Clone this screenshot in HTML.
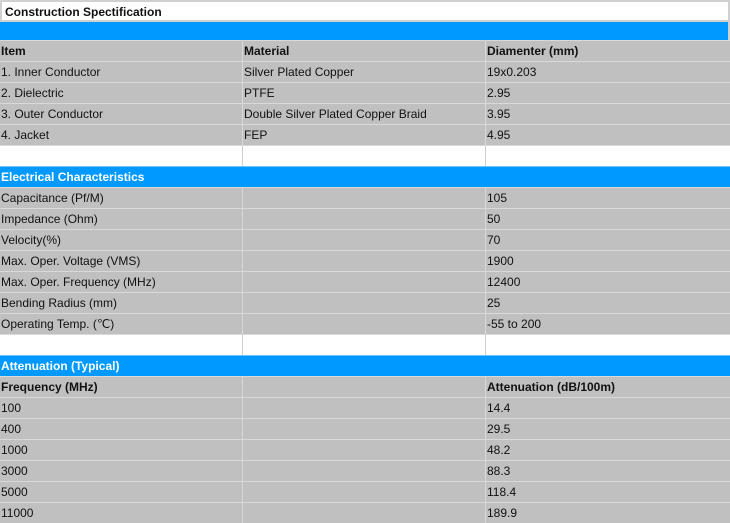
<!DOCTYPE html>
<html><head><meta charset="utf-8"><style>
*{margin:0;padding:0;box-sizing:border-box}
body{width:730px;height:522px;background:#fff;font-family:"Liberation Sans",Arial,sans-serif;font-size:12px;color:#111;position:relative;overflow:hidden}
.r{position:absolute;left:0;width:730px;height:21px;background:#c0c0c0;border-top:1px solid #d9d9d9}
.r span{position:absolute;top:3px;white-space:nowrap}
.c1{left:1px}.c2{left:244px}.c3{left:487px}
.r::before,.r::after{content:"";position:absolute;top:0;bottom:0;width:1px;background:#d9d9d9}
.r::before{left:242px}.r::after{left:485px}
.h span{font-weight:bold}
.w{background:#fff;border-top:1px solid #d9d9d9}
.w::before,.w::after{background:#cfcfcf}
.b{background:#0099ff;border-top:1px solid #6cc4ff;color:#fff;font-weight:bold}
.b::before,.b::after{display:none}
</style></head><body>
<div style="position:absolute;left:0;top:0;width:730px;height:22px;border:2px solid #d0d0d0;background:#fff"><span style="position:absolute;left:3px;top:3px;font-weight:bold;font-size:12px">Construction Spectification</span></div>
<div style="position:absolute;left:0;top:22px;width:728px;height:18px;background:#0099ff"></div>
<div style="position:absolute;left:728px;top:0;width:2px;height:522px;background:#d0d0d0"></div>

<div class="r h" style="top:40px"><span class="c1">Item</span><span class="c2">Material</span><span class="c3">Diamenter (mm)</span></div>
<div class="r" style="top:61px"><span class="c1">1. Inner Conductor</span><span class="c2">Silver Plated Copper</span><span class="c3">19x0.203</span></div>
<div class="r" style="top:82px"><span class="c1">2. Dielectric</span><span class="c2">PTFE</span><span class="c3">2.95</span></div>
<div class="r" style="top:103px"><span class="c1">3. Outer Conductor</span><span class="c2">Double Silver Plated Copper Braid</span><span class="c3">3.95</span></div>
<div class="r" style="top:124px"><span class="c1">4. Jacket</span><span class="c2">FEP</span><span class="c3">4.95</span></div>
<div class="r w" style="top:145px"></div>
<div class="r b" style="top:166px"><span class="c1">Electrical Characteristics</span></div>
<div class="r" style="top:187px"><span class="c1">Capacitance (Pf/M)</span><span class="c3">105</span></div>
<div class="r" style="top:208px"><span class="c1">Impedance (Ohm)</span><span class="c3">50</span></div>
<div class="r" style="top:229px"><span class="c1">Velocity(%)</span><span class="c3">70</span></div>
<div class="r" style="top:250px"><span class="c1">Max. Oper. Voltage (VMS)</span><span class="c3">1900</span></div>
<div class="r" style="top:271px"><span class="c1">Max. Oper. Frequency (MHz)</span><span class="c3">12400</span></div>
<div class="r" style="top:292px"><span class="c1">Bending Radius (mm)</span><span class="c3">25</span></div>
<div class="r" style="top:313px"><span class="c1">Operating Temp. (℃)</span><span class="c3">-55 to 200</span></div>
<div class="r w" style="top:334px"></div>
<div class="r b" style="top:355px"><span class="c1">Attenuation (Typical)</span></div>
<div class="r h" style="top:376px"><span class="c1">Frequency (MHz)</span><span class="c3">Attenuation (dB/100m)</span></div>
<div class="r" style="top:397px"><span class="c1">100</span><span class="c3">14.4</span></div>
<div class="r" style="top:418px"><span class="c1">400</span><span class="c3">29.5</span></div>
<div class="r" style="top:439px"><span class="c1">1000</span><span class="c3">48.2</span></div>
<div class="r" style="top:460px"><span class="c1">3000</span><span class="c3">88.3</span></div>
<div class="r" style="top:481px"><span class="c1">5000</span><span class="c3">118.4</span></div>
<div class="r" style="top:502px"><span class="c1">11000</span><span class="c3">189.9</span></div>
</body></html>
